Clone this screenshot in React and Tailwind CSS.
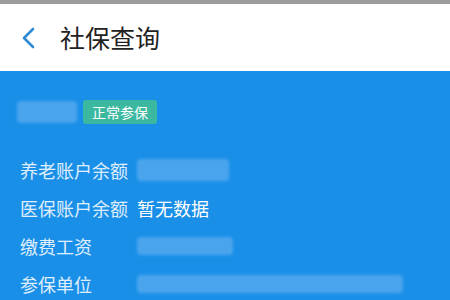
import React from 'react';

const font = { fontFamily: '"Noto Sans CJK SC", "Noto Sans", sans-serif' };

// Blurred stand-in for masked personal data
const Masked = ({ className }) => (
  <div className={`rounded-sm bg-[#5aacef] opacity-75 blur-[1.5px] ${className}`} />
);

const rows = [
  { label: '养老账户余额', masked: 'w-[92px] h-[22px] rounded-full' },
  { label: '医保账户余额', value: '暂无数据' },
  { label: '缴费工资', masked: 'w-[96px] h-[18px]' },
  { label: '参保单位', masked: 'w-[266px] h-[18px]' },
];

const App = () => {
  return (
    <div className="w-[450px] h-[300px] overflow-hidden bg-[#1a8fe8]" style={font}>
      <div className="h-[4px] bg-[#9c9c9c]" />
      <div className="h-[67px] bg-white flex items-center">
        <svg width="14" height="22" viewBox="0 0 14 22" className="ml-[21px]">
          <path d="M12 2 L3 11 L12 20" fill="none" stroke="#2f8ad4" strokeWidth="2.6" strokeLinecap="round" strokeLinejoin="round" />
        </svg>
        <div className="ml-[25px] text-[25px] text-[#222] leading-none">社保查询</div>
      </div>

      <div className="pt-[29px] pl-[17px]">
        <div className="flex items-center">
          <Masked className="w-[60px] h-[22px]" />
          <div className="ml-[6px] h-[24px] px-[9px] rounded-[3px] bg-[#3bb8a0] text-white text-[14px] flex items-center">
            正常参保
          </div>
        </div>

        <div className="mt-[35px] pl-[3px] flex flex-col gap-[16px]">
          {rows.map((r) => (
            <div key={r.label} className="flex items-center h-[22px]">
              <div className="w-[117px] text-[18px] text-white/85 leading-none">{r.label}</div>
              {r.value ? (
                <div className="text-[18px] text-white leading-none">{r.value}</div>
              ) : (
                <Masked className={r.masked} />
              )}
            </div>
          ))}
        </div>
      </div>
    </div>
  );
};

export default App;
